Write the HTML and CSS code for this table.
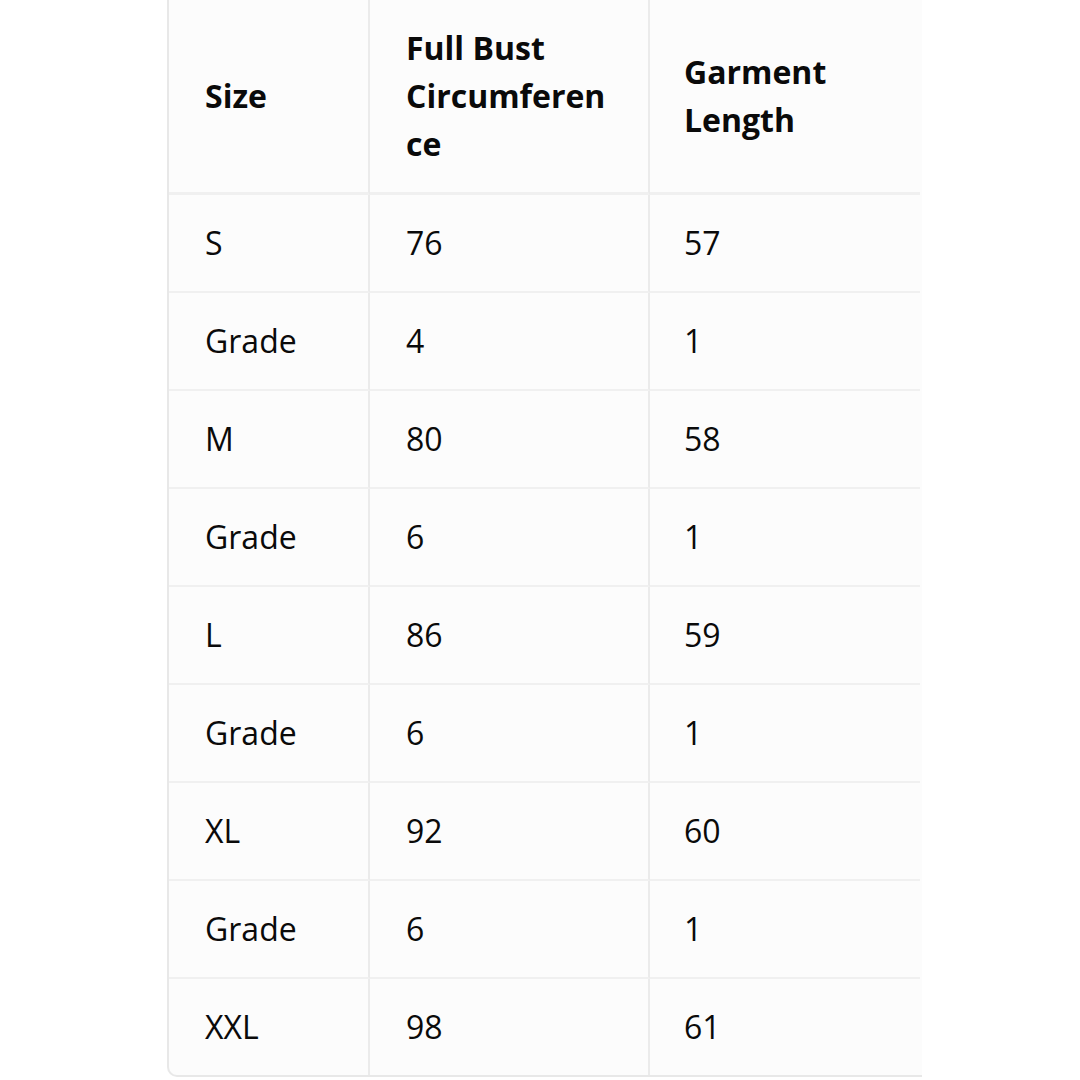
FILE: index.html
```html
<!DOCTYPE html>
<html lang="en">
<head>
<meta charset="utf-8">
<title>Size Chart</title>
<link rel="stylesheet" href="styles.css">
</head>
<body>
<div class="wrap">
  <table class="chart">
    <thead>
      <tr>
        <th class="c1">Size</th>
        <th class="c2">Full Bust Circumference</th>
        <th class="c3">Garment Length</th>
      </tr>
    </thead>
    <tbody>
      <tr><td>S</td><td>76</td><td>57</td></tr>
      <tr><td>Grade</td><td>4</td><td>1</td></tr>
      <tr><td>M</td><td>80</td><td>58</td></tr>
      <tr><td>Grade</td><td>6</td><td>1</td></tr>
      <tr><td>L</td><td>86</td><td>59</td></tr>
      <tr><td>Grade</td><td>6</td><td>1</td></tr>
      <tr><td>XL</td><td>92</td><td>60</td></tr>
      <tr><td>Grade</td><td>6</td><td>1</td></tr>
      <tr class="last"><td>XXL</td><td>98</td><td>61</td></tr>
    </tbody>
  </table>
</div>
</body>
</html>
```

FILE: styles.css
```css
html, body {
  margin: 0;
  padding: 0;
  background: #ffffff;
}

body {
  font-family: "Open Sans", "Noto Sans", "Liberation Sans", sans-serif;
  color: #0a0a0a;
}

.wrap {
  margin-left: 167px;
  width: 753px;
  overflow: hidden;
  border-left: 2px solid #e8e8e8;
  border-bottom: 2px solid #e8e8e8;
  border-bottom-left-radius: 10px;
  background: #fcfcfc;
}

.chart {
  table-layout: fixed;
  border-collapse: separate;
  border-spacing: 0;
  width: 751px;
  font-size: 32px;
  line-height: 48px;
}

.chart th,
.chart td {
  box-sizing: border-box;
  padding: 24px 36px;
  text-align: left;
  vertical-align: middle;
  border-right: 2px solid #ebebeb;
  border-bottom: 2px solid #f0f0f0;
  overflow-wrap: anywhere;
}

.chart th {
  font-weight: 700;
  border-bottom-width: 3px;
}

.chart td {
  font-weight: 400;
}

.chart .c1 { width: 201px; }
.chart .c2 { width: 280px; }
.chart .c3 { width: 270px; }

.chart th:nth-child(3),
.chart td:nth-child(3) {
  padding-left: 34px;
  border-right: none;
}

.chart tr.last td {
  border-bottom: none;
}
```
